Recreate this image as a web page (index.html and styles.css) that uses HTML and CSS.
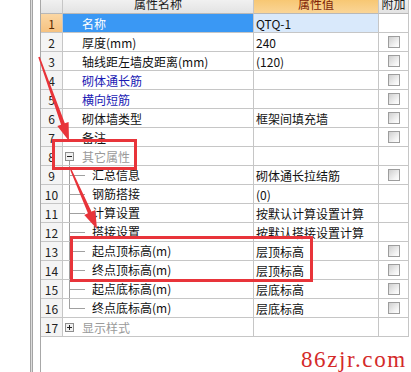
FILE: index.html
```html
<!DOCTYPE html>
<html lang="zh-CN">
<head>
    <meta charset="UTF-8">
    <title>属性编辑</title>
    <link rel="stylesheet" href="styles.css">
</head>
<body>
<div class="page">
    <div class="left-pane"></div>
    <div class="splitter"></div>
    <div class="gap"></div>

    <div class="grid-pane">
        <div class="grid">
            <div class="row head">
                <div class="cell num"></div>
                <div class="cell title">属性名称</div>
                <div class="cell title value-head">属性值</div>
                <div class="cell title">附加</div>
            </div>

            <div class="row selected">
                <div class="cell num">1</div>
                <div class="cell name">名称</div>
                <div class="cell value">QTQ-1</div>
                <div class="cell attach"></div>
            </div>
            <div class="row">
                <div class="cell num">2</div>
                <div class="cell name">厚度(mm)</div>
                <div class="cell value">240</div>
                <div class="cell attach"><span class="check"></span></div>
            </div>
            <div class="row">
                <div class="cell num">3</div>
                <div class="cell name">轴线距左墙皮距离(mm)</div>
                <div class="cell value">(120)</div>
                <div class="cell attach"><span class="check"></span></div>
            </div>
            <div class="row">
                <div class="cell num">4</div>
                <div class="cell name link">砌体通长筋</div>
                <div class="cell value"></div>
                <div class="cell attach"><span class="check"></span></div>
            </div>
            <div class="row">
                <div class="cell num">5</div>
                <div class="cell name link">横向短筋</div>
                <div class="cell value"></div>
                <div class="cell attach"><span class="check"></span></div>
            </div>
            <div class="row">
                <div class="cell num">6</div>
                <div class="cell name">砌体墙类型</div>
                <div class="cell value">框架间填充墙</div>
                <div class="cell attach"><span class="check"></span></div>
            </div>
            <div class="row">
                <div class="cell num">7</div>
                <div class="cell name">备注</div>
                <div class="cell value"></div>
                <div class="cell attach"><span class="check"></span></div>
            </div>

            <!-- group: 其它属性 -->
            <div class="row">
                <div class="cell num">8</div>
                <div class="cell name group open"><span class="toggle minus"></span>其它属性</div>
                <div class="cell value"></div>
                <div class="cell attach"></div>
            </div>
            <div class="row">
                <div class="cell num">9</div>
                <div class="cell name child"><span class="branch"></span>汇总信息</div>
                <div class="cell value">砌体通长拉结筋</div>
                <div class="cell attach"><span class="check"></span></div>
            </div>
            <div class="row">
                <div class="cell num">10</div>
                <div class="cell name child"><span class="branch"></span>钢筋搭接</div>
                <div class="cell value">(0)</div>
                <div class="cell attach"></div>
            </div>
            <div class="row">
                <div class="cell num">11</div>
                <div class="cell name child"><span class="branch"></span>计算设置</div>
                <div class="cell value">按默认计算设置计算</div>
                <div class="cell attach"></div>
            </div>
            <div class="row">
                <div class="cell num">12</div>
                <div class="cell name child"><span class="branch"></span>搭接设置</div>
                <div class="cell value">按默认搭接设置计算</div>
                <div class="cell attach"></div>
            </div>
            <div class="row">
                <div class="cell num">13</div>
                <div class="cell name child"><span class="branch"></span>起点顶标高(m)</div>
                <div class="cell value">层顶标高</div>
                <div class="cell attach"><span class="check"></span></div>
            </div>
            <div class="row">
                <div class="cell num">14</div>
                <div class="cell name child"><span class="branch"></span>终点顶标高(m)</div>
                <div class="cell value">层顶标高</div>
                <div class="cell attach"><span class="check"></span></div>
            </div>
            <div class="row">
                <div class="cell num">15</div>
                <div class="cell name child"><span class="branch"></span>起点底标高(m)</div>
                <div class="cell value">层底标高</div>
                <div class="cell attach"><span class="check"></span></div>
            </div>
            <div class="row">
                <div class="cell num">16</div>
                <div class="cell name child"><span class="branch last"></span>终点底标高(m)</div>
                <div class="cell value">层底标高</div>
                <div class="cell attach"><span class="check"></span></div>
            </div>

            <div class="row">
                <div class="cell num">17</div>
                <div class="cell name group"><span class="toggle plus"></span>显示样式</div>
                <div class="cell value"></div>
                <div class="cell attach"></div>
            </div>
        </div>
    </div>

    <!-- red annotation marks drawn over the grid -->
    <svg class="marks" width="411" height="372" viewBox="0 0 411 372">
        <rect x="53.5" y="140.5" width="82" height="28" class="mark-box"/>
        <rect x="71.5" y="237.5" width="240" height="43" class="mark-box"/>
        <polygon class="mark-arrow" points="38.25,57.27 61.07,124.71 57.3,126.06 69,141 68.6,122.02 64.83,123.37 39.75,56.73"/>
        <polygon class="mark-arrow" points="70.27,170.32 87.92,213.34 84.26,214.95 97,229 95.24,210.11 91.58,211.72 71.73,169.68"/>
    </svg>

    <div class="watermark">86zjr.com</div>
</div>
</body>
</html>
```

FILE: styles.css
```css
body {
    margin: 0;
    background-color: #fff;
    font-family: "Noto Sans CJK SC", sans-serif;
    font-size: 12px;
    color: #111;
}
.page {
    position: relative;
    display: flex;
    width: 411px;
    height: 372px;
    overflow: hidden;
}
.left-pane {
    width: 30px;
    flex: none;
}
.splitter {
    width: 3px;
    flex: none;
    box-sizing: border-box;
    border-left: 1px solid #a4a4a4;
    border-right: 1px solid #a4a4a4;
    background-color: #dcdcdc;
}
.gap {
    width: 7px;
    flex: none;
}
.grid-pane {
    width: 369px;
    flex: none;
    box-sizing: border-box;
    border-left: 1px solid #a8a8a8;
}
.grid {
    margin-top: -6px;
}
.row {
    display: grid;
    grid-template-columns: 22px 191px 125px 30px;
    height: 19px;
}
.row.head {
    height: 20px;
}
.cell {
    display: flex;
    align-items: center;
    box-sizing: border-box;
    border-right: 1px solid #c6c6c6;
    border-bottom: 1px solid #c6c6c6;
    white-space: nowrap;
    overflow: hidden;
}
.head .cell {
    justify-content: center;
    background: linear-gradient(#f7f7f7, #e3e3e3);
    border-bottom-color: #b8b8b8;
    color: #1a1a1a;
}
.head .value-head {
    background: linear-gradient(#f6c163, #fad597);
    color: #7e1e08;
}
.num {
    justify-content: center;
    background-color: #f4f4f4;
    color: #222;
}
.name {
    padding-left: 19px;
}
.value {
    padding-left: 2px;
}
.attach {
    justify-content: center;
}
.check {
    width: 12px;
    height: 12px;
    box-sizing: border-box;
    border: 1px solid #9d9d9d;
    background: linear-gradient(135deg, #cfcfcf, #f4f4f4 70%, #ffffff);
}

/* selected row */
.selected .num {
    background: linear-gradient(#fbd7a4, #f6c280);
    color: #5a2a00;
}
.selected .name {
    background-color: #3a98f4;
    color: #fff;
}
.selected .value {
    background-color: #d9e9fb;
}

.link {
    color: #1a1ab4;
}

/* tree groups */
.group {
    padding-left: 2px;
    color: #9a9a9a;
}
.group.open {
    background: linear-gradient(#a0a0a0, #a0a0a0) no-repeat 6px 100% / 1px 5px;
}
.toggle {
    width: 9px;
    height: 9px;
    margin-right: 8px;
    flex: none;
    box-sizing: border-box;
    border: 1px solid #8e8e8e;
    background-color: #f0f0f0;
}
.toggle.minus {
    background:
        linear-gradient(#222, #222) no-repeat 50% 50% / 5px 1px,
        #f0f0f0;
}
.toggle.plus {
    background:
        linear-gradient(#222, #222) no-repeat 50% 50% / 5px 1px,
        linear-gradient(#222, #222) no-repeat 50% 50% / 1px 5px,
        #f0f0f0;
}
.child {
    padding-left: 6px;
    align-items: stretch;
    line-height: 18px;
}
.child .branch {
    width: 16px;
    margin-right: 7px;
    flex: none;
    background:
        linear-gradient(#a0a0a0, #a0a0a0) no-repeat 0 0 / 1px 100%,
        linear-gradient(#a0a0a0, #a0a0a0) no-repeat 0 50% / 100% 1px;
}
.child .branch.last {
    background:
        linear-gradient(#a0a0a0, #a0a0a0) no-repeat 0 0 / 1px 50%,
        linear-gradient(#a0a0a0, #a0a0a0) no-repeat 0 50% / 100% 1px;
}

/* annotations */
.marks {
    position: absolute;
    left: 0;
    top: 0;
}
.mark-box {
    fill: none;
    stroke: #e8343a;
    stroke-width: 3;
}
.mark-arrow {
    fill: #e8343a;
}
.watermark {
    position: absolute;
    left: 301px;
    top: 348px;
    font-family: "Liberation Serif", serif;
    font-size: 23px;
    line-height: 23px;
    letter-spacing: 1.6px;
    color: #d42a2a;
}
```
